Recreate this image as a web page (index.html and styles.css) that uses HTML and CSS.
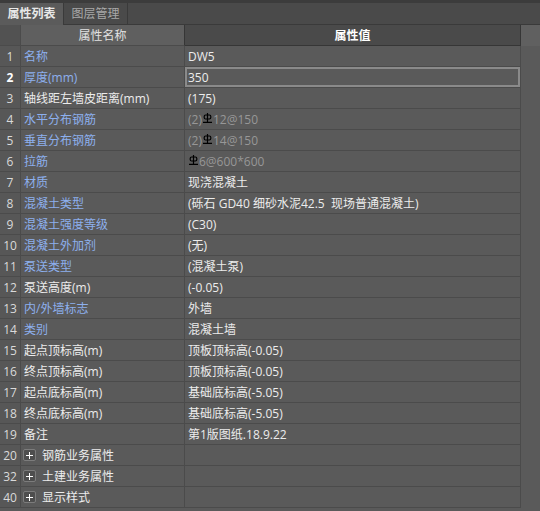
FILE: index.html
```html
<!DOCTYPE html>
<html lang="zh-CN">
<head>
<meta charset="utf-8">
<title>属性列表</title>
<link rel="stylesheet" href="styles.css">
</head>
<body>
<div class="topline"></div>
<div class="tabs">
  <div class="tab active">属性列表</div>
  <div class="tab">图层管理</div>
  <div class="tabfill"></div>
</div>
<div class="grid">
  <div class="c h0"></div><div class="c h1">属性名称</div><div class="c h2">属性值</div><div class="c h3"></div>

  <div class="c n">1</div><div class="c k blue">名称</div><div class="c v">DW5</div><div class="c s"></div>
  <div class="c n sel">2</div><div class="c k blue">厚度(mm)</div><div class="c v focus">350</div><div class="c s"></div>
  <div class="c n">3</div><div class="c k">轴线距左墙皮距离(mm)</div><div class="c v">(175)</div><div class="c s"></div>
  <div class="c n">4</div><div class="c k blue">水平分布钢筋</div><div class="c v dim">(2)<svg class="rb" viewBox="0 0 9 10" width="9" height="10"><path d="M4.5 0V9M1.2 3.4Q1.2 2 2.6 2H6.4Q7.8 2 7.8 3.4V4.6Q7.8 6 6.4 6H2.6Q1.2 6 1.2 4.6ZM0 9.4H9" fill="none" stroke="#000" stroke-width="1.2"/></svg>12@150</div><div class="c s"></div>
  <div class="c n">5</div><div class="c k blue">垂直分布钢筋</div><div class="c v dim">(2)<svg class="rb" viewBox="0 0 9 10" width="9" height="10"><path d="M4.5 0V9M1.2 3.4Q1.2 2 2.6 2H6.4Q7.8 2 7.8 3.4V4.6Q7.8 6 6.4 6H2.6Q1.2 6 1.2 4.6ZM0 9.4H9" fill="none" stroke="#000" stroke-width="1.2"/></svg>14@150</div><div class="c s"></div>
  <div class="c n">6</div><div class="c k blue">拉筋</div><div class="c v dim"><svg class="rb" viewBox="0 0 9 10" width="9" height="10"><path d="M4.5 0V9M1.2 3.4Q1.2 2 2.6 2H6.4Q7.8 2 7.8 3.4V4.6Q7.8 6 6.4 6H2.6Q1.2 6 1.2 4.6ZM0 9.4H9" fill="none" stroke="#000" stroke-width="1.2"/></svg>6@600*600</div><div class="c s"></div>
  <div class="c n">7</div><div class="c k blue">材质</div><div class="c v">现浇混凝土</div><div class="c s"></div>
  <div class="c n">8</div><div class="c k blue">混凝土类型</div><div class="c v">(砾石 GD40 细砂水泥42.5  现场普通混凝土)</div><div class="c s"></div>
  <div class="c n">9</div><div class="c k blue">混凝土强度等级</div><div class="c v">(C30)</div><div class="c s"></div>
  <div class="c n">10</div><div class="c k blue">混凝土外加剂</div><div class="c v">(无)</div><div class="c s"></div>
  <div class="c n">11</div><div class="c k blue">泵送类型</div><div class="c v">(混凝土泵)</div><div class="c s"></div>
  <div class="c n">12</div><div class="c k">泵送高度(m)</div><div class="c v">(-0.05)</div><div class="c s"></div>
  <div class="c n">13</div><div class="c k blue">内/外墙标志</div><div class="c v">外墙</div><div class="c s"></div>
  <div class="c n">14</div><div class="c k blue">类别</div><div class="c v">混凝土墙</div><div class="c s"></div>
  <div class="c n">15</div><div class="c k">起点顶标高(m)</div><div class="c v">顶板顶标高(-0.05)</div><div class="c s"></div>
  <div class="c n">16</div><div class="c k">终点顶标高(m)</div><div class="c v">顶板顶标高(-0.05)</div><div class="c s"></div>
  <div class="c n">17</div><div class="c k">起点底标高(m)</div><div class="c v">基础底标高(-5.05)</div><div class="c s"></div>
  <div class="c n">18</div><div class="c k">终点底标高(m)</div><div class="c v">基础底标高(-5.05)</div><div class="c s"></div>
  <div class="c n">19</div><div class="c k">备注</div><div class="c v">第1版图纸.18.9.22</div><div class="c s"></div>
  <div class="c n">20</div><div class="c k grp"><span class="plus"></span>钢筋业务属性</div><div class="c v"></div><div class="c s"></div>
  <div class="c n">32</div><div class="c k grp"><span class="plus"></span>土建业务属性</div><div class="c v"></div><div class="c s"></div>
  <div class="c n">40</div><div class="c k grp"><span class="plus"></span>显示样式</div><div class="c v"></div><div class="c s"></div>
</div>
</body>
</html>
```
FILE: styles.css
```css
html, body {
  margin: 0;
  padding: 0;
}
body {
  width: 540px;
  height: 511px;
  overflow: hidden;
  background: #5a5a5a;
  font-family: "Open Sans", "Noto Sans CJK SC", sans-serif;
  font-size: 12px;
  color: #ececec;
}
.topline {
  height: 3px;
  background: #3c3c3c;
}
.tabs {
  display: flex;
  height: 22px;
  background: #4a4a4a;
}
.tab {
  box-sizing: border-box;
  width: 64px;
  height: 22px;
  line-height: 21px;
  text-align: center;
  color: #a8a8a8;
  border-right: 1px solid #3a3a3a;
  border-bottom: 1px solid #3a3a3a;
  background: #4a4a4a;
}
.tab.active {
  background: #5b5b5b;
  color: #e8e8e8;
  font-weight: bold;
  border-bottom: none;
}
.tabfill {
  flex: 1;
  border-bottom: 1px solid #3a3a3a;
}
.grid {
  display: grid;
  grid-template-columns: 21px 164px 336px 19px;
  grid-auto-rows: 21px;
}
.c {
  box-sizing: border-box;
  height: 21px;
  line-height: 21px;
  border-right: 1px solid #4b4b4b;
  border-bottom: 1px solid #4b4b4b;
  white-space: pre;
  overflow: hidden;
  background: #5a5a5a;
}
.h0 {
  background: #525252;
}
.h1 {
  background: #5f5f5f;
  text-align: center;
  color: #e2e2e2;
  border-right-color: #363636;
}
.h2 {
  background: #4a4a4a;
  text-align: center;
  color: #ffffff;
  font-weight: bold;
  border-right-color: #363636;
  border-bottom-color: #363636;
}
.h3 {
  background: #606060;
  border-right: none;
  border-bottom: none;
}
.n {
  text-align: center;
  color: #dadada;
  background: #575757;
}
.n.sel {
  color: #ffffff;
  font-weight: bold;
}
.k {
  padding-left: 3px;
}
.blue {
  color: #8db0ee;
}
.v {
  padding-left: 3px;
}
.focus {
  box-shadow: inset 0 0 0 2px #8a8a8a;
}
.dim {
  color: #979797;
}
.rb {
  vertical-align: 1px;
  margin: 0 1px 0 1px;
}
.s {
  border-right: none;
  border-bottom: none;
}
.grp {
  display: flex;
  align-items: center;
  padding-left: 2px;
}
.plus {
  position: relative;
  box-sizing: border-box;
  width: 13px;
  height: 12px;
  margin-right: 6px;
  border: 1px solid #7c7c7c;
  border-radius: 2px;
  background: #4e4e4e;
}
.plus::before,
.plus::after {
  content: "";
  position: absolute;
  background: #ffffff;
}
.plus::before {
  left: 2px;
  top: 4.5px;
  width: 7px;
  height: 1px;
}
.plus::after {
  left: 5px;
  top: 1.5px;
  width: 1px;
  height: 7px;
}
```
